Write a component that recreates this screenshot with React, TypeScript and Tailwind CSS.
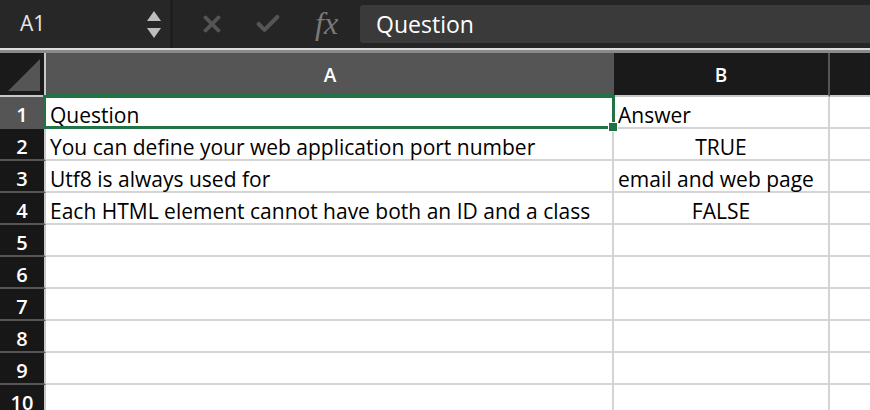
import React from 'react';
import { X, Check } from 'lucide-react';

const rows: { a: string; b: string; center?: boolean }[] = [
  { a: 'Question', b: 'Answer' },
  { a: 'You can define your web application port number', b: 'TRUE', center: true },
  { a: 'Utf8 is always used for', b: 'email and web page' },
  { a: 'Each HTML element cannot have both an ID and a class', b: 'FALSE', center: true },
  { a: '', b: '' },
  { a: '', b: '' },
  { a: '', b: '' },
  { a: '', b: '' },
  { a: '', b: '' },
  { a: '', b: '' },
];

export default function App(): React.ReactElement {
  return (
    <div className="w-[870px] h-[410px] overflow-hidden bg-white font-['Open_Sans',sans-serif]">
      {/* Toolbar */}
      <div className="h-[48px] bg-[#252525] flex items-center">
        <div className="w-[170px] h-full flex items-center justify-between pl-[20px] pr-[9px] bg-[#272727]">
          <span className="text-[21px] text-[#e6e6e6]">A1</span>
          <div className="flex flex-col items-center gap-[7px]">
            <div className="w-0 h-0 border-l-[7px] border-r-[7px] border-b-[10px] border-l-transparent border-r-transparent border-b-[#bdbdbd]" />
            <div className="w-0 h-0 border-l-[7px] border-r-[7px] border-t-[10px] border-l-transparent border-r-transparent border-t-[#bdbdbd]" />
          </div>
        </div>
        <div className="w-[3px] h-full bg-[#1e1e1e]" />
        <div className="flex items-center h-full">
          <X className="ml-[26px] w-[26px] h-[26px] text-[#555]" strokeWidth={3.5} />
          <Check className="ml-[29px] w-[28px] h-[28px] text-[#555]" strokeWidth={3.5} />
          <span className="ml-[33px] mb-[2px] text-[32px] italic text-[#7a7a7a] font-['Liberation_Serif',serif] leading-none">fx</span>
        </div>
        <div className="ml-[22px] flex-1 h-[38px] bg-[#3a3a3a] rounded-l-[3px] flex items-center pl-[16px]">
          <span className="text-[23px] text-white">Question</span>
        </div>
      </div>
      {/* Separator */}
      <div className="h-[2px] bg-[#dcdcdc]" />
      <div className="h-[3px] bg-[#8a8a8a]" />

      {/* Column headers */}
      <div className="flex h-[44px]">
        <div className="w-[46px] h-full bg-[#1a1a1a] border-r-2 border-b-2 border-[#c8c8c8] flex items-end justify-end p-[4px]">
          <div className="w-0 h-0 border-b-[32px] border-l-[32px] border-b-[#555] border-l-transparent" />
        </div>
        <div className="w-[568px] h-full bg-[#555555] border-b-[3px] border-[#217346] flex items-center justify-center pt-[3px] text-white text-[19px] font-semibold">
          A
        </div>
        <div className="w-[216px] h-full bg-[#1a1a1a] border-b-2 border-r-2 border-b-[#c8c8c8] border-r-[#555] flex items-center justify-center pt-[3px] text-white text-[19px] font-semibold">
          B
        </div>
        <div className="flex-1 h-full bg-[#1a1a1a] border-b-2 border-[#c8c8c8]" />
      </div>

      {/* Rows */}
      <div className="relative">
        {rows.map((r, i) => (
          <div key={i} className="flex h-[32px]">
            <div
              className={`w-[46px] h-full border-r-2 border-r-[#c8c8c8] border-b-2 border-b-[#555] flex items-center justify-center pt-[6px] text-white text-[20px] font-semibold ${
                i === 0 ? 'bg-[#555555]' : 'bg-[#171717]'
              }`}
            >
              {i + 1}
            </div>
            <div className="w-[568px] h-full border-r-2 border-b-2 border-[#d4d4d4] flex items-center pl-[4px] pt-[7px] text-[21px] text-black whitespace-nowrap">
              {r.a}
            </div>
            <div
              className={`w-[216px] h-full border-r-2 border-b-2 border-[#d4d4d4] flex items-center pt-[7px] text-[21px] text-black whitespace-nowrap ${
                r.center ? 'justify-center' : 'pl-[4px]'
              }`}
            >
              {r.b}
            </div>
            <div className="flex-1 h-full border-b-2 border-[#d4d4d4]" />
          </div>
        ))}
        {/* Selection A1 */}
        <div className="absolute left-[43px] -top-[2px] w-[572px] h-[34px] border-[3px] border-[#217346] pointer-events-none">
          <div className="absolute -right-[6px] -bottom-[6px] w-[10px] h-[10px] bg-[#217346] border border-white" />
        </div>
      </div>
    </div>
  );
}
